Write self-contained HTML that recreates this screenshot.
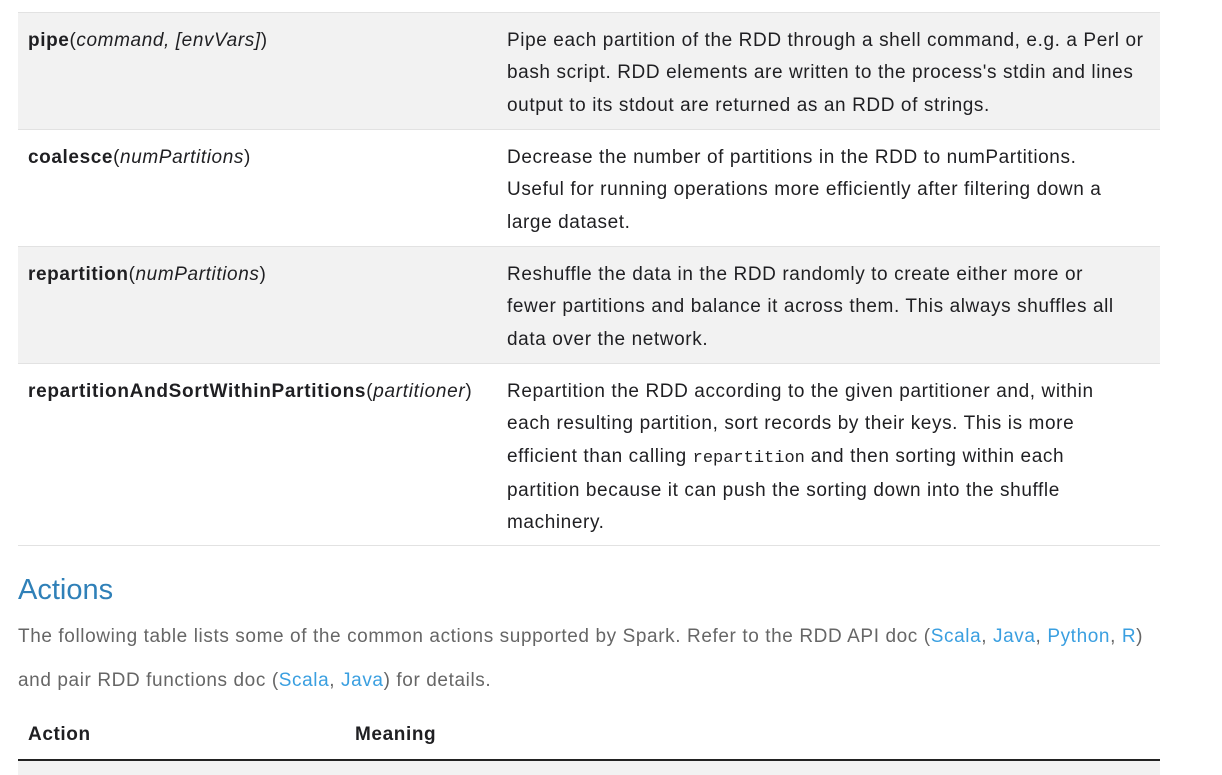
<!DOCTYPE html>
<html><head><meta charset="utf-8"><style>
html,body{margin:0;padding:0;background:#fff;width:1222px;height:775px;overflow:hidden}
body{font-family:"Liberation Sans",sans-serif;color:#1f1f22;font-size:19px;letter-spacing:0.6px}
.row{position:absolute;left:18px;width:1142px;border-bottom:1px solid #e2e2e2;box-sizing:border-box}
.g{background:#f2f2f2}
.c1{position:absolute;left:10px;top:12px;line-height:32.3px;white-space:nowrap}
.c2{position:absolute;left:489px;top:12px;line-height:32.3px;white-space:nowrap}
b{font-weight:bold}
code{font-family:"Liberation Mono",monospace;font-size:17px;letter-spacing:0}
a{color:#3a9fe0;text-decoration:none}
</style></head><body>
<div class="row g" style="top:12px;height:118px;border-top:1px solid #e2e2e2">
<div class="c1"><b>pipe</b>(<i>command, [envVars]</i>)</div>
<div class="c2">Pipe each partition of the RDD through a shell command, e.g. a Perl or<br>bash script. RDD elements are written to the process's stdin and lines<br>output to its stdout are returned as an RDD of strings.</div>
</div>
<div class="row" style="top:130px;height:117px">
<div class="c1"><b>coalesce</b>(<i>numPartitions</i>)</div>
<div class="c2">Decrease the number of partitions in the RDD to numPartitions.<br>Useful for running operations more efficiently after filtering down a<br>large dataset.</div>
</div>
<div class="row g" style="top:247px;height:117px">
<div class="c1"><b>repartition</b>(<i>numPartitions</i>)</div>
<div class="c2">Reshuffle the data in the RDD randomly to create either more or<br>fewer partitions and balance it across them. This always shuffles all<br>data over the network.</div>
</div>
<div class="row" style="top:364px;height:182px">
<div class="c1" style="letter-spacing:0.7px"><b>repartitionAndSortWithinPartitions</b>(<i>partitioner</i>)</div>
<div class="c2">Repartition the RDD according to the given partitioner and, within<br>each resulting partition, sort records by their keys. This is more<br>efficient than calling <code>repartition</code> and then sorting within each<br>partition because it can push the sorting down into the shuffle<br>machinery.</div>
</div>
<div style="position:absolute;left:18px;top:572px;font-size:29px;letter-spacing:0;color:#2f80b8;line-height:36px">Actions</div>
<div style="position:absolute;left:18px;top:615px;color:#666;line-height:44px;white-space:nowrap">The following table lists some of the common actions supported by Spark. Refer to the RDD API doc (<a>Scala</a>, <a>Java</a>, <a>Python</a>, <a>R</a>)<br>and pair RDD functions doc (<a>Scala</a>, <a>Java</a>) for details.</div>
<div style="position:absolute;left:28px;top:723px;font-weight:bold;line-height:24px">Action</div>
<div style="position:absolute;left:355px;top:723px;font-weight:bold;line-height:24px">Meaning</div>
<div style="position:absolute;left:18px;top:759px;width:1142px;height:2px;background:#222"></div>
<div style="position:absolute;left:18px;top:761px;width:1142px;height:14px;background:#f2f2f2"></div>
</body></html>
